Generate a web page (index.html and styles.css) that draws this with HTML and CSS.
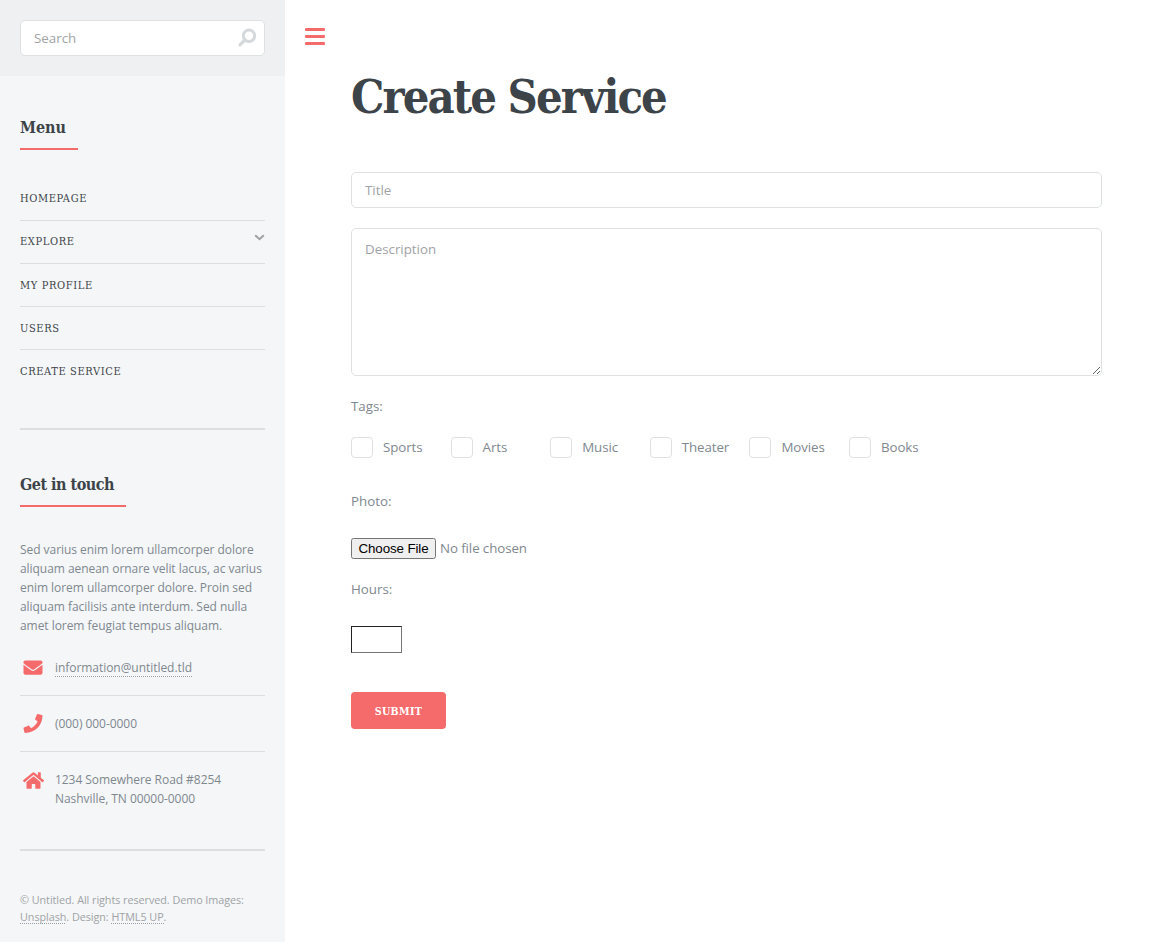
FILE: index.html
```
<!DOCTYPE html>
<html lang="en">
<head>
<meta charset="utf-8">
<title>Create Service</title>
<link rel="stylesheet" href="styles.css">
</head>
<body>
<div class="wrapper">
  <aside class="sidebar">
    <section class="search">
      <input class="field" type="text" placeholder="Search">
      <svg class="search-icon" viewBox="0 0 20 20"><circle cx="12" cy="7.800" r="5.700" fill="none" stroke="#d5d9dc" stroke-width="3"/><path d="M7.800 12 3 16.800" stroke="#d5d9dc" stroke-width="3.200" stroke-linecap="round"/></svg>
    </section>
    <nav class="menu">
      <h2 class="heading heading-menu"><span>Menu</span></h2>
      <ul class="links">
        <li><a>Homepage</a></li>
        <li><a>Explore</a><svg class="chevron" viewBox="0 0 11 7"><path d="M1.200 1.200 5.500 5.200 9.800 1.200" fill="none" stroke="#9fa3a6" stroke-width="2"/></svg></li>
        <li><a>My Profile</a></li>
        <li><a>Users</a></li>
        <li><a>Create Service</a></li>
      </ul>
    </nav>
    <section class="contact-section">
      <h2 class="heading heading-contact"><span>Get in touch</span></h2>
      <p class="blurb">Sed varius enim lorem ullamcorper dolore<br>aliquam aenean ornare velit lacus, ac varius<br>enim lorem ullamcorper dolore. Proin sed<br>aliquam facilisis ante interdum. Sed nulla<br>amet lorem feugiat tempus aliquam.</p>
      <ul class="contact">
        <li><svg class="icon" viewBox="0 0 512 512"><path d="M502.3 190.8c3.9-3.1 9.7-.2 9.7 4.7V400c0 26.500-21.500 48-48 48H48c-26.500 0-48-21.500-48-48V195.600c0-5 5.700-7.800 9.700-4.700 22.400 17.400 52.100 39.500 154.100 113.600 21.100 15.400 56.700 47.800 92.200 47.600 35.700.3 72-32.800 92.300-47.600 102-74.100 131.600-96.300 154-113.700zM256 320c23.200.4 56.600-29.200 73.400-41.400 132.700-96.300 142.800-104.700 173.400-128.700 5.800-4.500 9.200-11.500 9.200-18.900v-19c0-26.500-21.500-48-48-48H48c-26.500 0-48 21.500-48 48v19c0 7.400 3.400 14.300 9.200 18.900 30.600 23.900 40.700 32.400 173.400 128.700 16.800 12.200 50.200 41.800 73.400 41.400z"/></svg><a class="dotted">information@untitled.tld</a></li>
        <li><svg class="icon" viewBox="0 0 512 512"><path d="M493.4 24.600l-104-24c-11.300-2.600-22.900 3.300-27.500 13.900l-48 112c-4.200 9.800-1.400 21.300 6.900 28l60.600 49.600c-36 76.700-98.900 140.500-177.200 177.200l-49.600-60.600c-6.800-8.300-18.200-11.100-28-6.900l-112 48C3.900 366.500-2 378.100.6 389.400l24 104C27.100 504.200 36.700 512 48 512c256.100 0 464-207.500 464-464 0-11.200-7.700-20.900-18.600-23.400z"/></svg><span>(000) 000-0000</span></li>
        <li><svg class="icon icon-home" viewBox="0 0 576 512"><path d="M280.370 148.260L96 300.110V464a16 16 0 0 0 16 16l112.060-.29a16 16 0 0 0 15.920-16V368a16 16 0 0 1 16-16h64a16 16 0 0 1 16 16v95.640a16 16 0 0 0 16 16.050L464 480a16 16 0 0 0 16-16V300L295.670 148.260a12.190 12.190 0 0 0-15.300 0zM571.600 251.470L488 182.560V44.050a12 12 0 0 0-12-12h-56a12 12 0 0 0-12 12v72.610L318.470 43a48 48 0 0 0-61 0L4.340 251.470a12 12 0 0 0-1.600 16.900l25.500 31A12 12 0 0 0 45.150 301l235.220-193.740a12.190 12.190 0 0 1 15.300 0L530.900 301a12 12 0 0 0 16.900-1.600l25.500-31a12 12 0 0 0-1.700-16.930z"/></svg><span>1234 Somewhere Road #8254<br>Nashville, TN 00000-0000</span></li>
      </ul>
    </section>
    <footer class="footer">© Untitled. All rights reserved. Demo Images:<br><a class="dotted">Unsplash</a>. Design: <a class="dotted">HTML5 UP</a>.</footer>
  </aside>
  <main class="main">
    <div class="toggle"><i></i><i></i><i></i></div>
    <h1 class="title">Create Service</h1>
    <form class="form">
      <input class="field" type="text" placeholder="Title">
      <textarea class="field area" placeholder="Description"></textarea>
      <p class="label label-tags">Tags:</p>
      <div class="tags">
        <label><i></i>Sports</label>
        <label><i></i>Arts</label>
        <label><i></i>Music</label>
        <label><i></i>Theater</label>
        <label><i></i>Movies</label>
        <label><i></i>Books</label>
      </div>
      <p class="label label-photo">Photo:</p>
      <input class="file" type="file">
      <p class="label label-hours">Hours:</p>
      <input class="hours" type="text">
      <button class="submit" type="button">Submit</button>
    </form>
  </main>
</div>
</body>
</html>
```
FILE: styles.css
```
* { box-sizing: border-box; margin: 0; padding: 0; }
body { background: #fff; color: #7f888f; font: 400 13.333px/22px "Open Sans", sans-serif; overflow: hidden; }
ul { list-style: none; }
.wrapper { display: flex; height: 942px; }
.sidebar { width: 285px; flex: none; background: #f4f6f8; font-size: 12px; line-height: 19px; letter-spacing: -.05px; }
.search { position: relative; height: 76px; padding: 20px; background: #eff0f2; }
.field { display: block; width: 100%; height: 36px; padding: 0 13px; border: 1px solid #dde1e3; border-radius: 5px; background: #fff; color: #7f888f; font: 400 13.333px/22px "Open Sans", sans-serif; outline: none; }
.field::placeholder { color: #9fa3a6; opacity: 1; }
.search-icon { position: absolute; left: 237px; top: 28px; width: 20px; height: 20px; }
.heading, .title, .links, .submit { font-family: "Roboto Slab", "DejaVu Serif Condensed", "DejaVu Serif", serif; }
.heading { display: flex; color: #3d4449; font-size: 16px; font-weight: 700; line-height: 22px; letter-spacing: 0; }
.heading span { height: 33px; border-bottom: 2px solid #f56a6a; white-space: nowrap; }
.heading-menu span { width: 58px; }
.heading-contact span { width: 106px; letter-spacing: -.5px; }
.menu { padding: 41px 20px 0; }
.links { margin-top: 27px; color: #3d4449; font-size: 11px; letter-spacing: .62px; text-transform: uppercase; }
.links li { display: flex; justify-content: space-between; height: 43.1px; padding-top: 11.4px; border-top: 1px solid #dcdfe2; }
.links li:first-child { border-top-color: transparent; }
.chevron { width: 11px; height: 7px; margin-top: 2px; }
.contact-section { margin: 36px 20px 0; border-top: 2px solid #dcdfe2; padding-top: 44px; }
.blurb { margin-top: 33px; }
.contact { margin-top: 13px; }
.contact li { display: flex; gap: 12px; padding: 18px 0 18px 3px; border-top: 1px solid #dcdfe2; }
.contact li:first-child { border-top: 0; padding-top: 10px; }
.icon { flex: none; width: 20px; height: 19px; fill: #f56a6a; }
.icon-home { width: 21px; margin: 1px -1px 0 0; }
.dotted { background: repeating-linear-gradient(90deg, #9a9fa5 0 1px, transparent 1px 2px) left bottom / 100% 1px no-repeat; }
.footer { margin: 23px 20px 0; padding-top: 40px; border-top: 2px solid #dcdfe2; color: #9fa3a6; font-size: 10.8px; line-height: 17px; }
.main { flex: 1; padding: 28px 49px 0 66px; }
.toggle { display: flex; flex-direction: column; gap: 4px; width: 20px; margin-left: -46px; }
.toggle i { height: 3px; border-radius: 1px; background: #f56a6a; }
.title { height: 60px; margin-top: 22px; color: #3d4449; font-size: 46.67px; line-height: 60px; font-weight: 700; letter-spacing: -1.93px; white-space: nowrap; }
.form { margin-top: 45px; }
.area { height: 148px; margin-top: 20px; padding: 9px 13px; resize: vertical; }
.label-tags { margin-top: 19px; }
.tags { display: flex; margin-top: 20px; letter-spacing: -.1px; }
.tags label { display: flex; gap: 10px; width: 99.6px; line-height: 21px; }
.tags i { width: 22px; height: 21px; border: 1px solid #dde1e3; border-radius: 4px; }
.label-photo { margin-top: 32px; }
.file { display: block; height: 21px; margin-top: 26px; color: #7f888f; font: 400 13.333px/21px "Open Sans", sans-serif; letter-spacing: -.1px; }
.file::file-selector-button { width: 85px; padding: 1px 0; font: 400 13.333px "Liberation Sans", sans-serif; letter-spacing: -.1px; }
.label-hours { margin-top: 19px; }
.hours { display: block; width: 51px; height: 27px; margin-top: 26px; border: 1px solid; border-color: #222 #767676 #767676 #222; outline: none; }
.submit { display: block; width: 95px; height: 37px; margin-top: 39px; padding-top: 2px; border: 0; border-radius: 4px; background: #f56a6a; color: #fff; font-size: 10.67px; font-weight: 700; letter-spacing: .35px; text-transform: uppercase; }
```
